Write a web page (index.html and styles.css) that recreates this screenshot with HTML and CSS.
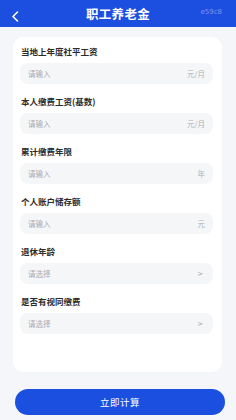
FILE: index.html
```html
<!DOCTYPE html>
<html lang="zh-CN">
<head>
  <meta charset="UTF-8">
  <meta name="viewport" content="width=device-width, initial-scale=1.0">
  <title>职工养老金</title>
  <link rel="stylesheet" href="styles.css">
</head>
<body>

  <header class="topbar">
    <span class="back">
      <svg width="8" height="11" viewBox="0 0 8 11"><path d="M6.5 1 L2 5.5 L6.5 10" fill="none" stroke="#fff" stroke-width="1.6" stroke-linecap="round" stroke-linejoin="round"/></svg>
    </span>
    <h1 class="title">职工养老金</h1>
    <span class="code">e59c8</span>
  </header>

  <div class="card">
    <div class="field">
      <div class="label">当地上年度社平工资</div>
      <div class="input"><span class="ph">请输入</span><span class="unit">元/月</span></div>
    </div>
    <div class="field">
      <div class="label">本人缴费工资(基数)</div>
      <div class="input"><span class="ph">请输入</span><span class="unit">元/月</span></div>
    </div>
    <div class="field">
      <div class="label">累计缴费年限</div>
      <div class="input"><span class="ph">请输入</span><span class="unit">年</span></div>
    </div>
    <div class="field">
      <div class="label">个人账户储存额</div>
      <div class="input"><span class="ph">请输入</span><span class="unit">元</span></div>
    </div>
    <div class="field">
      <div class="label">退休年龄</div>
      <div class="input"><span class="ph">请选择</span><span class="arrow">&gt;</span></div>
    </div>
    <div class="field">
      <div class="label">是否有视同缴费</div>
      <div class="input"><span class="ph">请选择</span><span class="arrow">&gt;</span></div>
    </div>
  </div>

  <button class="calc">立即计算</button>

</body>
</html>
```

FILE: styles.css
```css
* {
  box-sizing: border-box;
}

body {
  margin: 0;
  width: 236px;
  height: 420px;
  overflow: hidden;
  font-family: "Noto Sans CJK SC", "Noto Sans", sans-serif;
  background-color: #f4f6fa;
}

.topbar {
  height: 27px;
  background-color: #1c4ee0;
  display: flex;
  align-items: center;
  justify-content: center;
  position: relative;
}

.back {
  position: absolute;
  left: 11px;
  top: 11px;
  display: flex;
}

.title {
  margin: 0;
  color: #fff;
  font-size: 12.5px;
  font-weight: 700;
  line-height: 1;
  margin-top: 2px;
  letter-spacing: 0.3px;
}

.code {
  position: absolute;
  right: 14px;
  top: 8px;
  font-size: 7px;
  color: #7b97ee;
  font-family: "DejaVu Sans", sans-serif;
}

.card {
  margin: 10px 14px 0 13px;
  height: 335px;
  background-color: #fff;
  border-radius: 10px;
  padding: 8px 9px 0 7px;
}

.field {
  margin-bottom: 11px;
}

.label {
  font-size: 8.5px;
  font-weight: 700;
  color: #2b2b2b;
  line-height: 13px;
  margin-bottom: 5px;
  padding-left: 1px;
}

.input {
  height: 21px;
  border-radius: 8px;
  background-color: #f5f6f8;
  display: flex;
  align-items: center;
  justify-content: space-between;
  padding: 0 8px 0 8px;
  font-size: 7.5px;
  color: #a9abb0;
}

.unit {
  color: #b0b2b6;
}

.arrow {
  font-family: "DejaVu Sans", sans-serif;
  font-size: 7px;
  color: #a0a2a6;
  margin-right: 2px;
}

.calc {
  display: block;
  margin: 17px auto 0 15px;
  width: 210px;
  height: 26px;
  border: none;
  border-radius: 13px;
  background-color: #1a4fe0;
  color: #fff;
  font-family: "Noto Sans CJK SC", sans-serif;
  font-size: 9.5px;
  letter-spacing: 0.5px;
}
```
